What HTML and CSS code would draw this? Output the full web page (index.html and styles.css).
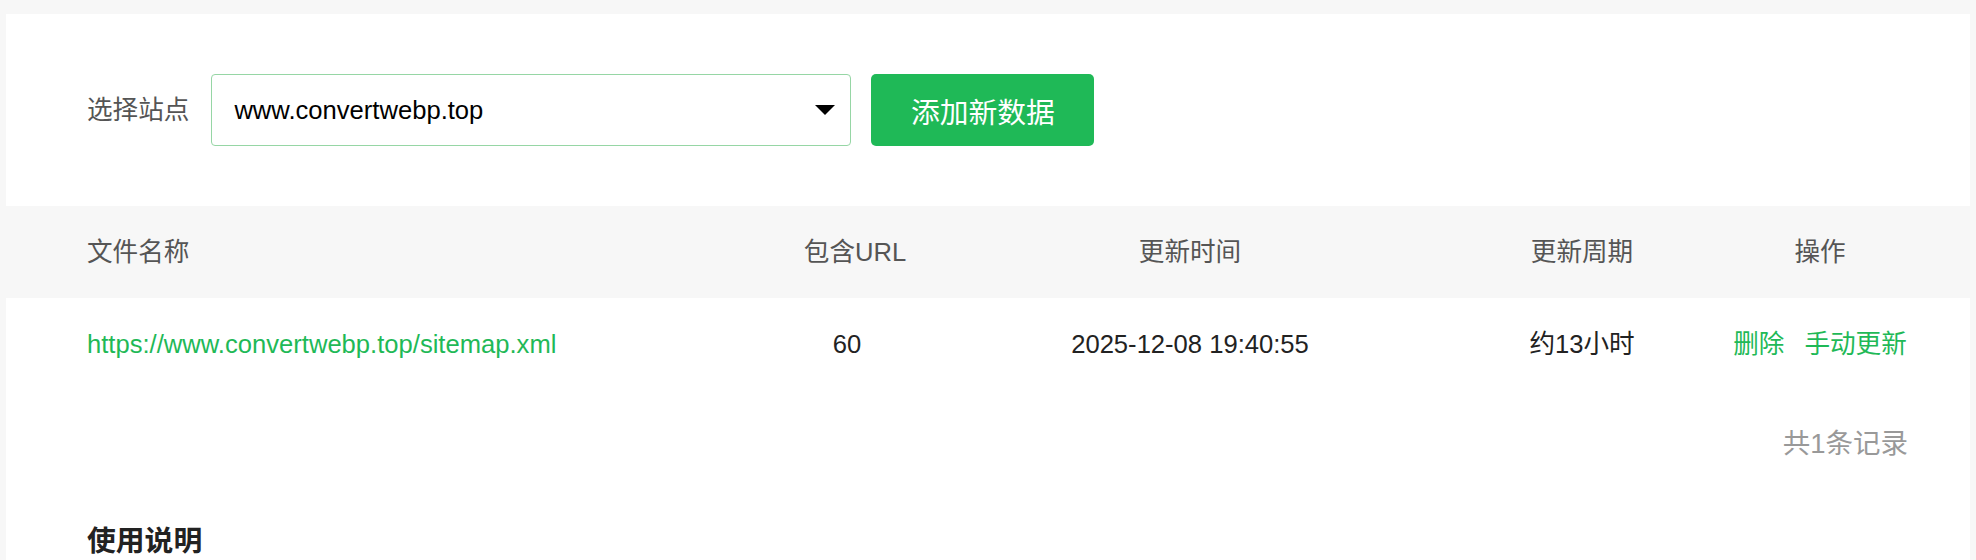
FILE: index.html
```html
<!DOCTYPE html>
<html lang="zh-CN">
<head>
<meta charset="utf-8">
<title>Sitemap</title>
<link rel="stylesheet" href="styles.css">
</head>
<body>
<div class="card">
  <div class="toolbar">
    <span class="toolbar-label">选择站点</span>
    <div class="select">
      <span class="select-value">www.convertwebp.top</span>
      <svg class="select-arrow" width="20" height="10" viewBox="0 0 20 10"><path d="M0 0H20L10 10Z" fill="#000"/></svg>
    </div>
    <button class="btn-primary" type="button">添加新数据</button>
  </div>

  <div class="table">
    <div class="tr thead">
      <div class="cell c-name">文件名称</div>
      <div class="cell c-center c-url">包含URL</div>
      <div class="cell c-center">更新时间</div>
      <div class="cell c-center">更新周期</div>
      <div class="cell c-center">操作</div>
    </div>
    <div class="tr tbody">
      <div class="cell c-name"><a class="link" href="#">https://www.convertwebp.top/sitemap.xml</a></div>
      <div class="cell c-center c-count">60</div>
      <div class="cell c-center">2025-12-08 19:40:55</div>
      <div class="cell c-center">约13小时</div>
      <div class="cell c-center actions"><a class="link" href="#">删除</a><a class="link" href="#">手动更新</a></div>
    </div>
  </div>

  <div class="pager">共1条记录</div>

  <h3 class="section-title">使用说明</h3>
</div>
</body>
</html>
```

FILE: styles.css
```css
html, body {
  margin: 0;
  padding: 0;
}
body {
  background: #f7f7f7;
  font-family: "Liberation Sans", "Noto Sans CJK SC", sans-serif;
  font-size: 25.6px;
  color: #222;
}
.card {
  margin: 14px 6px 0;
  background: #fff;
  padding-top: 60px;
  min-height: 546px;
}
.toolbar {
  display: flex;
  align-items: center;
  padding-left: 81px;
}
.toolbar-label {
  color: #555;
  line-height: 32px;
  margin-right: 22px;
}
.select {
  box-sizing: border-box;
  width: 640px;
  height: 72px;
  border: 1px solid #96d6a5;
  border-radius: 4px;
  display: flex;
  align-items: center;
  justify-content: space-between;
  padding: 0 15px 0 22px;
  background: #fff;
}
.select-value {
  color: #000;
  line-height: 32px;
}
.select-arrow {
  display: block;
}
.btn-primary {
  box-sizing: border-box;
  margin-left: 20px;
  width: 223px;
  height: 72px;
  border: none;
  border-radius: 5px;
  background: #1fb957;
  color: #fff;
  font-family: "Liberation Sans", "Noto Sans CJK SC", sans-serif;
  font-size: 28.8px;
  padding: 0;
  cursor: pointer;
}
.table {
  margin-top: 60px;
}
.tr {
  display: grid;
  grid-template-columns: 700px 130px 546px 238px 238px;
  padding: 0 31px 0 81px;
  height: 92px;
  align-items: center;
}
.thead {
  background: #f7f7f7;
  color: #555;
}
.tbody {
  color: #222;
}
.cell {
  line-height: 32px;
  white-space: nowrap;
}
.c-center {
  text-align: center;
}
.c-url {
  padding-left: 6px;
}
.c-count {
  padding-right: 10px;
}
.link {
  color: #1fb957;
  text-decoration: none;
}
.actions {
  display: flex;
  justify-content: center;
  gap: 20px;
}
.pager {
  margin-top: 38px;
  padding-right: 62px;
  text-align: right;
  color: #999;
  font-size: 27.5px;
  line-height: 32px;
}
.section-title {
  margin: 61px 0 0;
  padding-left: 81px;
  font-size: 28.8px;
  font-weight: bold;
  line-height: 40px;
  color: #222;
}
```
